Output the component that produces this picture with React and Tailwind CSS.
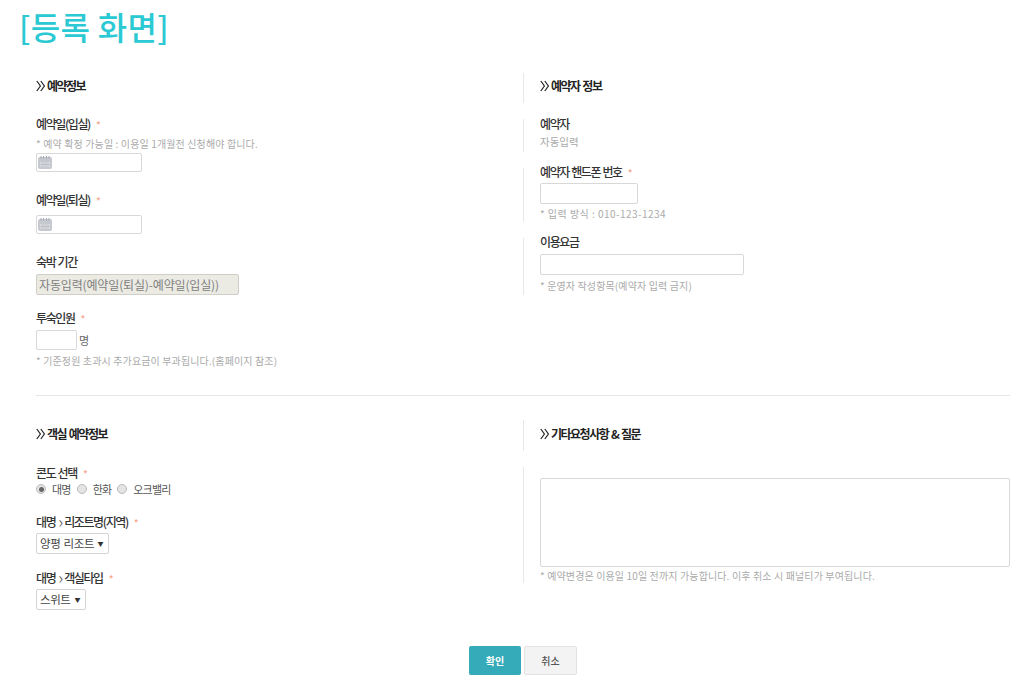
function Star() {
  return <span className="ml-[6px] text-[10px] text-[#f7a58a]">*</span>;
}

function Chevrons() {
  return (
    <svg width="11" height="12" viewBox="0 0 11 12" fill="none" stroke="#222" strokeWidth="1.2" className="shrink-0">
      <path d="M0.8 1 L4.4 6 L0.8 11" />
      <path d="M4.8 1 L8.4 6 L4.8 11" />
    </svg>
  );
}

function Heading({ children }) {
  return (
    <h3 className="flex h-[18px] items-center text-[12px] font-bold leading-[18px] tracking-[-1.5px] [word-spacing:1.5px] text-[#222]">
      <Chevrons />
      <span>{children}</span>
    </h3>
  );
}

function Label({ children, star, className = "" }) {
  return (
    <div className={`h-[18px] whitespace-nowrap text-[12px] font-medium leading-[18px] tracking-[-1.4px] [word-spacing:1px] text-[#333] ${className}`}>
      {children}
      {star && <Star />}
    </div>
  );
}

function Sep() {
  return <span className="ml-[3px] mr-[1px] align-[-1px] text-[17px] font-light leading-[0] tracking-normal text-[#444]">›</span>;
}

function Hint({ children, className = "" }) {
  return <p className={`h-[14px] whitespace-nowrap text-[10px] leading-[14px] tracking-[0.13px] text-[#aaa] ${className}`}>{children}</p>;
}

function CalendarIcon() {
  return (
    <svg width="14" height="13" viewBox="0 0 14 13" className="ml-[1px]">
      <rect x="0" y="1" width="14" height="12" rx="2" fill="#c6c8d0" />
      <path d="M3 0v2.5M5.5 0v2.5M8.5 0v2.5M11 0v2.5" stroke="#a6a8b3" strokeWidth="1" />
      <rect x="2" y="6" width="10" height="5" fill="#dcdde3" />
      <path d="M4 6v5M6 6v5M8 6v5M10 6v5M2 8.5h10" stroke="#b3b5be" strokeWidth="0.6" />
    </svg>
  );
}

function DateInput({ className = "" }) {
  return (
    <div className={`flex h-[19px] w-[106px] items-center rounded-[2px] border border-[#d8d8d8] bg-white ${className}`}>
      <CalendarIcon />
    </div>
  );
}

function Select({ value, width }) {
  return (
    <div className={`flex h-[21px] items-center justify-between rounded-[2px] border border-[#d5d5d5] bg-white pl-[3px] pr-[5px] text-[11.5px] tracking-[-0.4px] [word-spacing:1px] text-[#444] ${width}`}>
      <span className="whitespace-nowrap">{value}</span>
      <span className="text-[6px] text-[#333]">▼</span>
    </div>
  );
}

function Radio({ checked, label }) {
  return (
    <label className="flex items-center gap-[6px]">
      <span className="flex h-[10px] w-[10px] items-center justify-center rounded-full border border-[#bbb] bg-[#e4e4e4]">
        {checked && <span className="h-[5px] w-[5px] rounded-full bg-[#666]" />}
      </span>
      <span>{label}</span>
    </label>
  );
}

function RightBlock({ children, className = "" }) {
  return <div className={`border-l border-[#e8e8e8] pl-4 ${className}`}>{children}</div>;
}

export default function App() {
  return (
    <div className="h-[685px] w-[1022px] overflow-hidden bg-white font-['Noto_Sans_CJK_KR','Noto_Sans',sans-serif]">
      <h1 className="h-[72px] pl-[19px] pt-[4px] text-[32px] font-medium leading-[44px] tracking-[0.3px] text-[#2bc9d3]">[등록 화면]</h1>

      <section className="grid h-[323px] grid-cols-[487px_1fr] pl-9">
        <div className="pt-[5px]">
          <Heading>예약정보</Heading>
          <Label star className="mt-[20px]">예약일(입실)</Label>
          <Hint className="mt-[4px]">* 예약 확정 가능일 : 이용일 1개월전 신청해야 합니다.</Hint>
          <DateInput className="mt-[2px]" />
          <Label star className="mt-[19px]">예약일(퇴실)</Label>
          <DateInput className="mt-[6px]" />
          <Label className="mt-[19px]">숙박 기간</Label>
          <div className="mt-[3px] flex h-[21px] w-[203px] items-center rounded-[2px] border border-[#cfcfc8] bg-[#ebebe4] pl-[2px] text-[12px] tracking-[-0.15px] text-[#808080]">
            자동입력(예약일(퇴실)-예약일(입실))
          </div>
          <Label star className="mt-[14px]">투숙인원</Label>
          <div className="mt-[3px] flex items-center gap-[2px] text-[11px] text-[#666]">
            <div className="h-[20px] w-[41px] rounded-[2px] border border-[#d8d8d8] bg-white" />
            <span>명</span>
          </div>
          <Hint className="mt-[4px]">* 기준정원 초과시 추가요금이 부과됩니다.(홈페이지 참조)</Hint>
        </div>

        <div className="flex flex-col gap-[16px] pt-[1px]">
          <RightBlock className="flex h-[30px] items-center pb-1">
            <Heading>예약자 정보</Heading>
          </RightBlock>
          <RightBlock className="h-[33px]">
            <Label className="-mt-[4px]">예약자</Label>
            <p className="mt-[2px] text-[10.5px] leading-[14px] text-[#aaa]">자동입력</p>
          </RightBlock>
          <RightBlock className="h-[54px]">
            <Label star className="-mt-[5px]">예약자 핸드폰 번호</Label>
            <div className="mt-[2px] h-[21px] w-[98px] rounded-[2px] border border-[#d8d8d8] bg-white" />
            <Hint className="mt-[3px] tracking-[0.47px]">* 입력 방식 : 010-123-1234</Hint>
          </RightBlock>
          <RightBlock className="h-[57px]">
            <Label className="-mt-[5px]">이용요금</Label>
            <div className="mt-[3px] h-[21px] w-[204px] rounded-[2px] border border-[#d8d8d8] bg-white" />
            <Hint className="mt-[4px]">* 운영자 작성항목(예약자 입력 금지)</Hint>
          </RightBlock>
        </div>
      </section>

      <hr className="ml-9 w-[974px] border-0 border-t border-[#e6e6e6]" />

      <section className="grid h-[220px] grid-cols-[487px_1fr] pl-9 pt-[24px]">
        <div className="pt-[5px]">
          <Heading>객실 예약정보</Heading>
          <Label star className="mt-[21px]">콘도 선택</Label>
          <div className="mt-[-2px] flex h-[18px] items-center gap-[6px] text-[11px] tracking-[-0.8px] text-[#555]">
            <Radio checked label="대명" />
            <Radio label="한화" />
            <Radio label="오크밸리" />
          </div>
          <Label star className="mt-[15px]">대명<Sep />리조트명(지역)</Label>
          <div className="mt-[2px]"><Select value="양평 리조트" width="w-[73px]" /></div>
          <Label star className="mt-[15px]">대명<Sep />객실타입</Label>
          <div className="mt-[2px]"><Select value="스위트" width="w-[50px]" /></div>
        </div>

        <div className="flex flex-col gap-[16px]">
          <RightBlock className="flex h-[31px] items-center pb-[4px]">
            <Heading>기타요청사항 &amp; 질문</Heading>
          </RightBlock>
          <RightBlock className="h-[116px] pt-[11px]">
            <div className="h-[89px] w-[470px] rounded-[2px] border border-[#d8d8d8] bg-white" />
            <Hint className="mt-[2px]">* 예약변경은 이용일 10일 전까지 가능합니다. 이후 취소 시 패널티가 부여됩니다.</Hint>
          </RightBlock>
        </div>
      </section>

      <div className="mt-[30px] flex justify-center gap-[3px] pl-[24px]">
        <button className="h-[29px] w-[52px] rounded-[2px] bg-[#35aab8] text-[10px] font-bold text-white">확인</button>
        <button className="h-[29px] w-[53px] rounded-[2px] border border-[#e2e2e2] bg-[#f3f3f3] text-[10px] font-medium text-[#555]">취소</button>
      </div>
    </div>
  );
}
